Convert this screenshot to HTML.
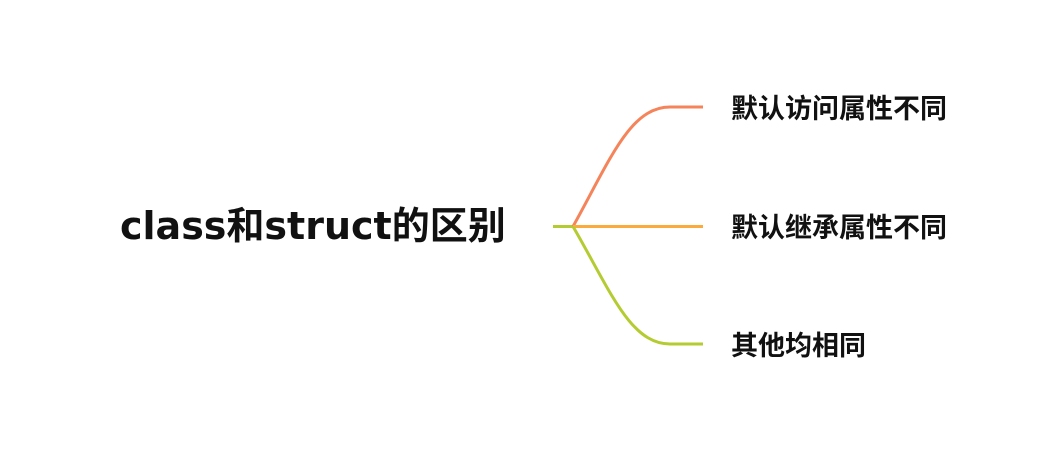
<!DOCTYPE html>
<html><head><meta charset="utf-8"><style>
body{margin:0;width:1048px;height:453px;background:#fff;position:relative;overflow:hidden;font-family:"Liberation Sans","Noto Sans CJK SC",sans-serif;}
.t{position:absolute;font-weight:bold;color:#111;white-space:nowrap;line-height:1;}
</style></head><body>
<svg width="1048" height="453" style="position:absolute;left:0;top:0">
<path d="M553 226.5 H573" stroke="#b5cb32" stroke-width="3" fill="none"/>
<path d="M573 226.5 C610 160 630 107 670 107 H703" stroke="#f5845a" stroke-width="3" fill="none"/>
<path d="M573 226.5 H703" stroke="#fbab3c" stroke-width="3" fill="none"/>
<path d="M573 226.5 C610 290 630 344 670 344 H703" stroke="#b5cb32" stroke-width="3" fill="none"/>
</svg>
<div class="t" style="left:120px;top:207px;font-size:38px;font-family:'DejaVu Sans','Noto Sans CJK SC',sans-serif">class和struct的区别</div>
<div class="t" style="left:731px;top:93px;font-size:27px;font-family:'Noto Sans CJK SC',sans-serif">默认访问属性不同</div>
<div class="t" style="left:731px;top:212px;font-size:27px;font-family:'Noto Sans CJK SC',sans-serif">默认继承属性不同</div>
<div class="t" style="left:731px;top:330px;font-size:27px;font-family:'Noto Sans CJK SC',sans-serif">其他均相同</div>
</body></html>
